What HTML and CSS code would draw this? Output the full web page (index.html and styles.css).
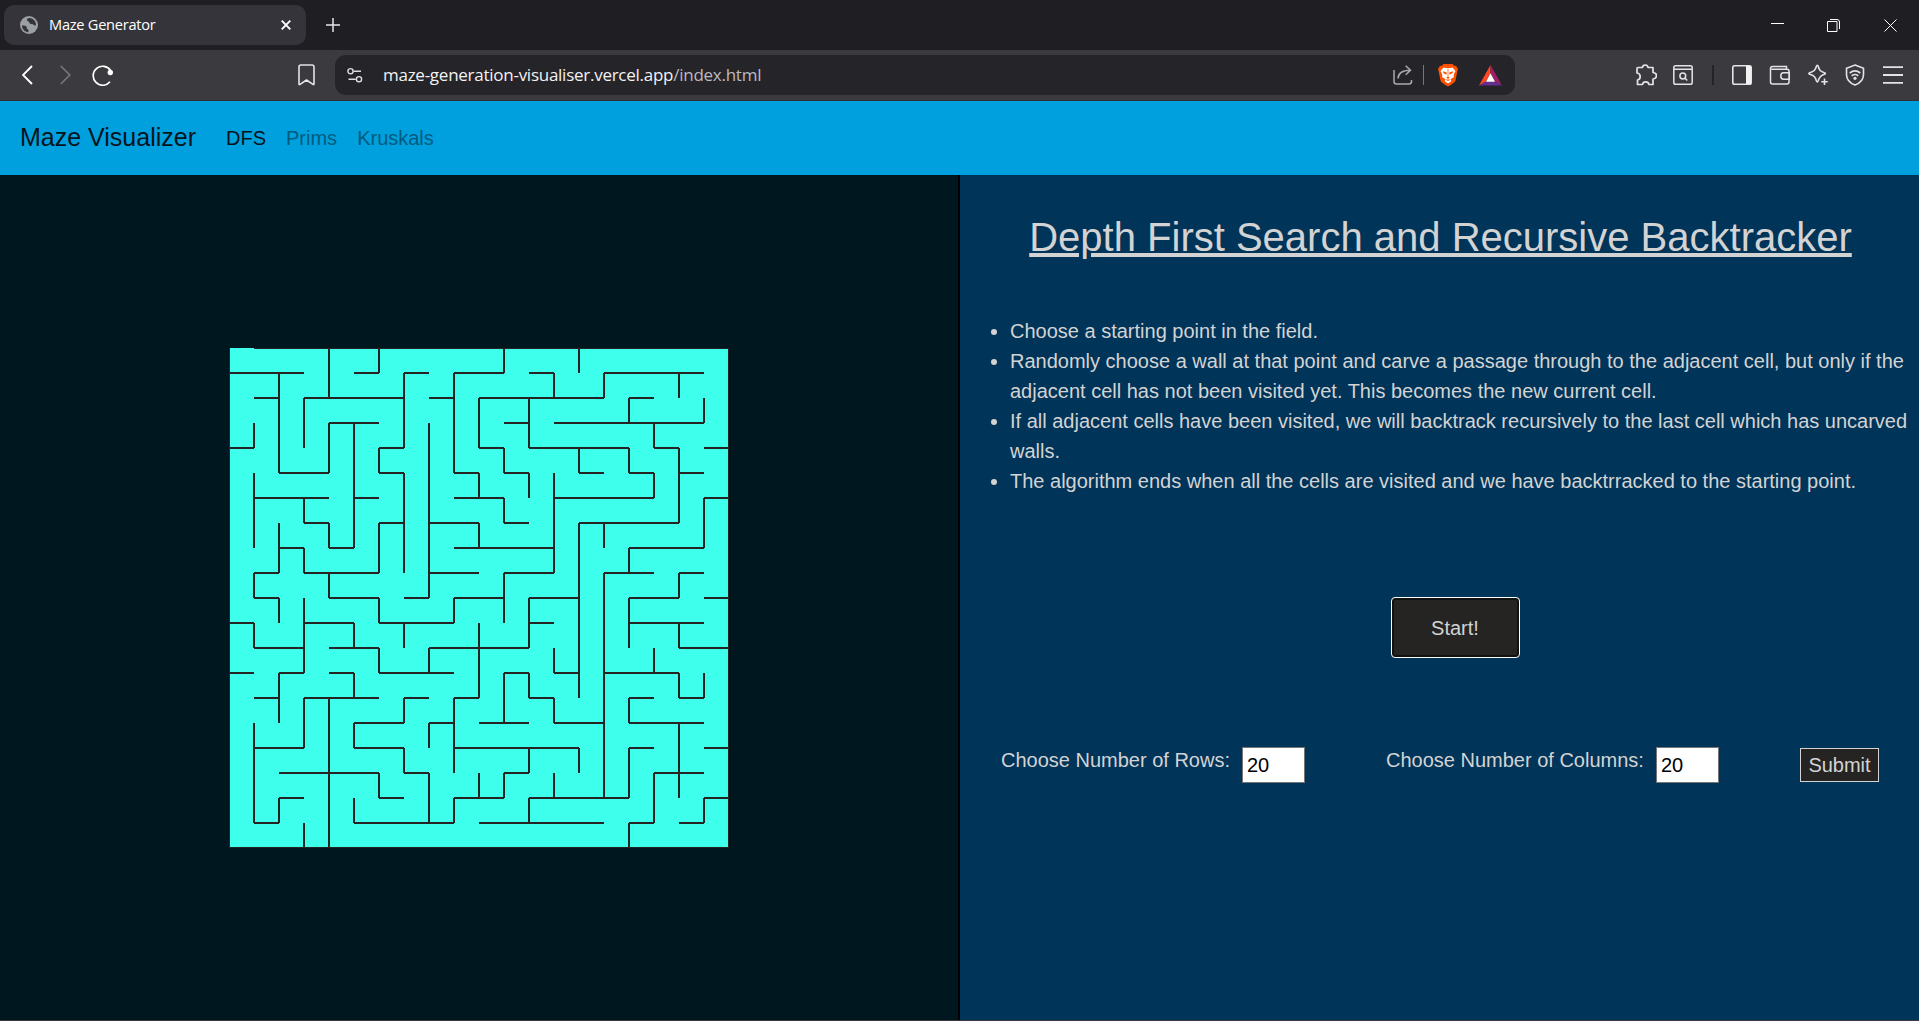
FILE: index.html
```html
<!DOCTYPE html>
<html lang="en">
<head>
<meta charset="utf-8">
<title>Maze Generator</title>
<link rel="stylesheet" href="styles.css">
</head>
<body>
<div class="tabstrip">
  <div class="tab">
    <svg class="globe" width="18" height="18" viewBox="0 0 18 18"><circle cx="9" cy="9" r="9" fill="#9aa0a6"/><path d="M2 9.500c2 0 4 0 4.600 1.200.6 1.100-.4 1.600.8 2.200 1.200.5 1.300 1.600 1 3.300C4.600 16 2 13 2 9.500zM9.500 2c-2 .3-2.700 1.200-2.500 2.300.2 1.200 2 1 2.300 2.200.3 1.300 1.200 1.500 2.700 1.500 1.700 0 1.500 2 4 1.300C16.200 5.500 13.500 2.300 9.500 2z" fill="#35343a"/></svg>
    <span class="tab-title">Maze Generator</span>
    <svg width="10" height="10" viewBox="0 0 10 10" stroke="#fff" stroke-width="1.900" fill="none"><path d="M.7.7l8.600 8.600M9.300.7L.7 9.300"/></svg>
  </div>
  <svg class="newtab" width="14" height="14" viewBox="0 0 14 14" stroke="#e6e6e8" stroke-width="1.500" fill="none"><path d="M7 0v14M0 7h14"/></svg>
  <div class="window-buttons">
    <svg width="13" height="13" viewBox="0 0 13 13" stroke="#fff" fill="none"><path d="M0 4.500h13"/></svg>
    <svg width="13" height="13" viewBox="0 0 13 13" stroke="#fff" fill="none"><path d="M.5 2.500h9.500v10H.5zM3 .5h7q2.500 0 2.500 2.500v7"/></svg>
    <svg width="13" height="13" viewBox="0 0 13 13" stroke="#fff" fill="none"><path d="M.5.5l12 12M12.500.5l-12 12"/></svg>
  </div>
</div>
<div class="toolbar">
  <div class="nav-buttons">
    <svg width="12" height="20" viewBox="0 0 12 20" stroke="#fff" stroke-width="1.900" fill="none"><path d="M10 1L1 10l9 9"/></svg>
    <svg width="12" height="20" viewBox="0 0 12 20" stroke="#77767b" stroke-width="1.700" fill="none"><path d="M.8 1l9 9-9 9"/></svg>
    <svg width="22" height="22" viewBox="0 0 22 22" fill="none"><path d="M18 17.800A9.500 9.500 0 1 1 18.600 6.500" stroke="#fff" stroke-width="1.700"/><circle cx="18.300" cy="8.500" r="2.700" fill="#fff"/></svg>
  </div>
  <svg class="bookmark" width="17" height="22" viewBox="0 0 17 22" stroke="#e4e4e6" stroke-width="1.600" fill="none" stroke-linejoin="round"><path d="M1 20V3q0-2 2-2h11q2 0 2 2v17q0 1-1 .4L8.500 16 2 20.400q-1 .6-1-.4z"/></svg>
  <div class="address">
    <svg class="site" width="16" height="16" viewBox="0 0 16 16" stroke="#dedee0" stroke-width="1.400" fill="none"><circle cx="3.500" cy="4.200" r="2.600"/><path d="M6.500 4.200H14M1.500 12.200h7.300"/><circle cx="12" cy="12.200" r="2.600"/></svg>
    <span class="url">maze-generation-visualiser.vercel.app<span class="path">/index.html</span></span>
    <svg class="share" width="20" height="20" viewBox="0 0 20 20" stroke="#aaa9ae" stroke-width="1.500" fill="none"><path d="M1 5v11.500Q1 19 3.500 19H16q2.500 0 2.500-2.500V15M5 13.500Q5.500 5.500 17 5.300M12.700.8L17.500 5.300l-4.800 4.500"/></svg>
    <span class="address-rule"></span>
    <svg class="brave" width="20" height="24" viewBox="0 0 20 24"><path d="M5.500 1h9l2 2 1.500-.2L20 6l-.8 3-1.700 8.500Q17 19.500 10 23.500 3 19.500 2.500 17.500L.8 9 0 6l2-3.200 1.500.2z" fill="#ff5000"/><path d="M5.500 4.500L8 5h4l2.500-.5L17.500 8l-1.800 3.500.2 2.500-3 2 .3 2.200L10 20.500 6.800 18.200l.3-2.200-3-2 .2-2.500L2.500 8z" fill="#fff"/><path d="M5 8.300l3.800 1.200-.5 2.200L5.300 10zM15 8.300l-3.800 1.200.5 2.200 3-1.700zM8.200 14.500L10 13.800l1.800.7L10 16zM7 16.500l3 1.600 3-1.600" fill="#ff5000"/><path d="M10 5.500v9" stroke="#ff5000" stroke-width=".7"/></svg>
    <svg class="bat" width="23" height="21" viewBox="0 0 23 21"><path d="M11.500 0L0 20.500l7-4 4.500-8z" fill="#ff4724"/><path d="M11.500 0L23 20.500l-7-4-4.500-8z" fill="#9e1f63"/><path d="M0 20.500h23l-7-4H7z" fill="#662d91"/><path d="M11.500 8.300L16 16.700H7z" fill="#fff"/></svg>
  </div>
  <div class="actions">
    <svg width="21" height="22" viewBox="0 0 21 22" stroke="#e4e4e6" stroke-width="1.700" fill="none" stroke-linejoin="round"><path d="M2 3.500h4.500Q6.700 1 9.200 1t2.800 2.500h5v5q3.500.2 3.500 3.200T17 15v5.500h-4Q12.500 17.800 9.700 17.800T6.500 20.500H1.500V16Q4.200 15.500 4.200 12.500T1 9V4.500q0-1 1-1z"/></svg>
    <svg class="find" width="20" height="20" viewBox="0 0 20 20" stroke="#e4e4e6" stroke-width="1.500" fill="none"><rect x=".8" y=".8" width="18.400" height="18.400" rx="1.800"/><path d="M1 4.300h18M11.800 13l2.500 2.500"/><circle cx="9.800" cy="11" r="2.900"/></svg>
    <span class="action-rule"></span>
    <svg width="20" height="20" viewBox="0 0 20 20" fill="none"><rect x=".8" y=".8" width="18.400" height="18.400" rx="1.800" stroke="#e4e4e6" stroke-width="1.600"/><path d="M14 1h5v18h-5z" fill="#f2f2f3"/></svg>
    <svg width="21" height="20" viewBox="0 0 21 20" stroke="#e4e4e6" stroke-width="1.500" fill="none"><path d="M17.500 4V1.500H3.500Q1.500 1.500 1.500 3.500V17q0 2 2 2H18q2 0 2-2V6q0-1.700-2-1.700H2.500M20.500 7.800h-6q-2.700 0-2.700 3.200t2.700 3.200h6z"/></svg>
    <svg width="20" height="22" viewBox="0 0 20 22" stroke="#e4e4e6" stroke-width="1.600" fill="none" stroke-linejoin="round"><path d="M9.300 1.200q.6 0 .9 1C11.300 6.300 12.200 7.500 16.500 8.700q2 .7 0 1.600C13 11.300 11.500 12.500 10.200 16.800q-.9 2.400-1.800 0C7.200 12.700 6 11.500 1.700 10.300q-1.700-.8 0-1.600C6 7.500 7.300 6.300 8.400 2.200q.4-1 .9-1z"/><path d="M16.500 14.500v6.400M13.300 17.700h6.400"/></svg>
    <svg width="20" height="22" viewBox="0 0 20 22" stroke="#e4e4e6" stroke-width="1.600" fill="none"><path d="M10 1l8.500 3.200v6.300c0 5-3.200 8.500-8.500 10.500C4.700 19 1.500 15.500 1.500 10.500V4.200zM4.700 9q5.300-4.200 10.600 0M6.700 11.800q3.300-2.600 6.600 0"/><circle cx="10" cy="14.300" r="1.600" fill="#e4e4e6" stroke="none"/></svg>
    <svg width="20" height="18" viewBox="0 0 20 18" stroke="#e4e4e6" stroke-width="1.800"><path d="M0 1.200h20M0 9h20M0 16.800h20"/></svg>
  </div>
</div>
<header class="navbar">
  <a class="brand">Maze Visualizer</a>
  <a class="link active">DFS</a>
  <a class="link">Prims</a>
  <a class="link">Kruskals</a>
</header>
<main class="page">
  <section class="field"><canvas id="maze" width="500" height="500"></canvas></section>
  <section class="info">
    <h1>Depth First Search and Recursive Backtracker</h1>
    <ul>
      <li>Choose a starting point in the field.</li>
      <li>Randomly choose a wall at that point and carve a passage through to the adjacent cell, but only if the adjacent cell has not been visited yet. This becomes the new current cell.</li>
      <li>If all adjacent cells have been visited, we will backtrack recursively to the last cell which has uncarved walls.</li>
      <li>The algorithm ends when all the cells are visited and we have backtrracked to the starting point.</li>
    </ul>
    <button class="start">Start!</button>
    <form class="size">
      <label for="rows">Choose Number of Rows:</label>
      <input id="rows" type="text" value="20">
      <label class="cols-label" for="cols">Choose Number of Columns:</label>
      <input id="cols" type="text" value="20">
      <button class="submit" type="button">Submit</button>
    </form>
  </section>
</main>
<script src="maze.js"></script>
</body>
</html>
```
FILE: styles.css
```css
* { box-sizing: border-box; }
body {
  margin: 0;
  height: 1021px;
  display: flex;
  flex-direction: column;
  overflow: hidden;
  background: #3b3a3f;
  font-family: "Liberation Sans", Arial, sans-serif;
}
svg { display: block; flex: none; }

.tabstrip {
  height: 50px;
  flex: none;
  display: flex;
  align-items: center;
  background: #1f1e23;
  padding-left: 4px;
}
.tab {
  width: 302px;
  height: 40px;
  border-radius: 10px;
  background: #35343a;
  display: flex;
  align-items: center;
  padding: 0 15px 0 16px;
  color: #fff;
  font: 14.6px "Open Sans", "Noto Sans", sans-serif;
}
.tab-title { flex: 1; padding: 0 0 2px 11px; letter-spacing: -0.25px; }
.newtab { margin-left: 20px; }
.window-buttons {
  margin-left: auto;
  display: flex;
  gap: 43px;
  padding-right: 22px;
}
.window-buttons svg:last-child { margin-left: 1px; }

.toolbar {
  height: 51px;
  flex: none;
  display: flex;
  align-items: center;
  background: #3b3a3f;
  border-bottom: 1px solid #2f3238;
}
.nav-buttons {
  width: 298px;
  display: flex;
  align-items: center;
  gap: 26px;
  padding-left: 22px;
}
.nav-buttons svg:last-child { margin-left: -6px; }
.address {
  width: 1180px;
  height: 40px;
  margin-left: 20px;
  border-radius: 11px;
  background: #252429;
  display: flex;
  align-items: center;
  padding: 0 13px 0 12px;
}
.url {
  flex: 1;
  padding: 0 0 2px 20px;
  color: #f2f2f3;
  font: 17px "Open Sans", "Noto Sans", sans-serif;
  letter-spacing: -0.26px;
}
.path { color: #bbbabf; }
.address-rule { width: 1px; height: 20px; background: #77767b; margin: 0 14px 0 10px; }
.bat { margin-left: 21px; }
.actions {
  flex: 1;
  display: flex;
  justify-content: space-between;
  align-items: center;
  padding: 0 16px 0 121px;
}
.find { transform: translateX(-2px); }
.action-rule { width: 2px; height: 20px; background: #242328; }

.navbar {
  height: 74px;
  flex: none;
  display: flex;
  align-items: center;
  padding: 0 20px;
  background: #00a0de;
}
.brand { font-size: 25px; color: #06141c; margin-right: 30px; padding-bottom: 2px; }
.link { font-size: 20px; color: #005b7e; margin-right: 20px; }
.active { color: #06141c; }

.page { height: 845px; flex: none; display: flex; }
.field {
  width: 960px;
  background: #00171f;
  border-right: 2px solid #000;
  display: flex;
  align-items: center;
  justify-content: center;
}
#maze { display: block; }
.info {
  flex: 1;
  background: #003459;
  color: #d3d3d3;
  font-size: 20px;
  line-height: 30px;
  display: flex;
  flex-direction: column;
  align-items: center;
}
h1 {
  margin: 37px 0 0 2px;
  font-size: 40px;
  font-weight: 400;
  line-height: 50px;
  text-decoration: underline;
}
ul { margin: 54px 0 0; padding-left: 50px; width: 100%; }
button { font: inherit; color: #d3d3d3; background: #252422; }
.start {
  width: 129px;
  height: 61px;
  margin: 101px 0 0 31px;
  padding: 0;
  border: 1px solid #fff;
  border-radius: 4px;
  box-shadow: inset 0 0 0 2px #111;
}
.size {
  align-self: stretch;
  display: flex;
  align-items: flex-start;
  margin-top: 89px;
  padding: 0 40px 0 41px;
}
.size label { line-height: 27px; }
.cols-label { margin-left: 81px; }
input {
  width: 63px;
  height: 36px;
  margin-left: 12px;
  padding: 1px 4px;
  border: 1px solid #767676;
  border-radius: 0;
  background: #fff;
  color: #000;
  font: 20px "Liberation Sans", Arial, sans-serif;
}
.submit {
  width: 79px;
  height: 34px;
  margin: 1px 0 0 auto;
  padding: 0;
  border: 1px solid #d3d3d3;
}
```
FILE: maze.js
```javascript
const CELL = 25;
// For each grid row line 0..20: spans of columns with a wall.
const rows = [
  "1-20", "0-3 5-6 7-8 9-11 12-13 15-19", "1-2 3-7 8-9 10-15 16-17",
  "4-6 11-12 13-19", "0-1 6-7 10-11 12-16 17-18 19-20",
  "2-4 6-7 9-10 11-12 14-15 16-17 18-19", "1-4 5-6 9-11 13-17 19-20",
  "3-4 6-7 8-10 11-12 14-18", "2-3 4-5 9-13 16-19",
  "1-2 3-6 8-10 11-13 15-17 18-19", "1-2 4-6 7-8 9-11 12-14 16-18 19-20",
  "0-1 3-5 6-9 12-13 16-19", "1-3 4-6 8-12 18-20",
  "0-1 2-3 4-5 6-9 11-12 13-14 15-18", "1-2 3-6 7-8 9-10 12-13 16-17 18-19",
  "5-7 8-9 10-12 13-15 16-19", "1-3 5-7 9-14 16-17 19-20",
  "2-6 7-8 11-12 17-19", "2-3 6-7 9-11 12-16 19-20",
  "1-2 5-9 10-15 16-17 18-19", "0-20"
];
// For each grid column line 0..20: spans of rows with a wall.
const cols = [
  "0-20", "3-4 5-8 9-10 11-12 15-19", "1-5 7-9 10-11 13-15 18-19",
  "2-4 6-7 8-9 10-13 14-16 19-20", "0-2 3-5 7-8 9-10 14-20",
  "3-8 11-12 13-14 15-16 18-19", "0-1 4-5 7-9 10-11 12-13 17-18",
  "1-4 5-9 11-12 14-15 16-17", "3-10 12-13 15-16 17-19",
  "1-5 10-11 14-17 18-19", "2-4 5-6 7-8 11-14 17-18",
  "0-1 4-5 6-7 9-11 13-15 17-18", "2-4 5-6 10-12 13-14 16-17 18-19",
  "1-2 5-9 12-13 14-15 17-18", "0-1 4-5 7-14 16-17", "1-2 7-8 9-18",
  "2-3 4-5 8-9 10-12 14-15 16-18 19-20", "3-4 5-6 12-13 17-19",
  "1-2 4-7 9-10 11-12 13-14 15-18", "2-3 6-8 13-14 18-19", "0-20"
];
const ctx = document.getElementById("maze").getContext("2d");
ctx.fillStyle = "#3dffec";
ctx.fillRect(0, 0, 500, 500);
ctx.strokeStyle = "#252422";
ctx.lineWidth = 2;
ctx.beginPath();
const spans = text => text.split(" ").map(s => s.split("-").map(n => n * CELL));
rows.forEach((text, i) => spans(text).forEach(([a, b]) => {
  ctx.moveTo(a, i * CELL);
  ctx.lineTo(b, i * CELL);
}));
cols.forEach((text, i) => spans(text).forEach(([a, b]) => {
  ctx.moveTo(i * CELL, a);
  ctx.lineTo(i * CELL, b);
}));
ctx.stroke();
```
